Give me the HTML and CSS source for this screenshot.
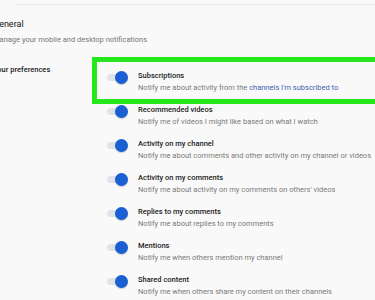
FILE: index.html
```html
<!DOCTYPE html>
<html lang="en">
<head>
    <meta charset="UTF-8">
    <meta name="viewport" content="width=device-width, initial-scale=1.0">
    <title>Notifications</title>
    <link rel="stylesheet" href="styles.css">
</head>
<body>
    <div class="divider"></div>
    <div class="section">
        <h2>General</h2>
        <p class="section-desc">Manage your mobile and desktop notifications</p>
        <div class="prefs">
            <div class="prefs-label">Your preferences</div>
            <div class="prefs-list">
                <div class="row highlighted">
                    <span class="toggle on"><span class="thumb"></span></span>
                    <div class="row-text">
                        <div class="row-title">Subscriptions</div>
                        <div class="row-desc">Notify me about activity from the <a href="#">channels I'm subscribed to</a></div>
                    </div>
                    <div class="highlight"></div>
                </div>
                <div class="row">
                    <span class="toggle on"><span class="thumb"></span></span>
                    <div class="row-text">
                        <div class="row-title">Recommended videos</div>
                        <div class="row-desc">Notify me of videos I might like based on what I watch</div>
                    </div>
                </div>
                <div class="row">
                    <span class="toggle on"><span class="thumb"></span></span>
                    <div class="row-text">
                        <div class="row-title">Activity on my channel</div>
                        <div class="row-desc">Notify me about comments and other activity on my channel or videos</div>
                    </div>
                </div>
                <div class="row">
                    <span class="toggle on"><span class="thumb"></span></span>
                    <div class="row-text">
                        <div class="row-title">Activity on my comments</div>
                        <div class="row-desc">Notify me about activity on my comments on others' videos</div>
                    </div>
                </div>
                <div class="row">
                    <span class="toggle on"><span class="thumb"></span></span>
                    <div class="row-text">
                        <div class="row-title">Replies to my comments</div>
                        <div class="row-desc">Notify me about replies to my comments</div>
                    </div>
                </div>
                <div class="row">
                    <span class="toggle on"><span class="thumb"></span></span>
                    <div class="row-text">
                        <div class="row-title">Mentions</div>
                        <div class="row-desc">Notify me when others mention my channel</div>
                    </div>
                </div>
                <div class="row">
                    <span class="toggle on"><span class="thumb"></span></span>
                    <div class="row-text">
                        <div class="row-title">Shared content</div>
                        <div class="row-desc">Notify me when others share my content on their channels</div>
                    </div>
                </div>
            </div>
        </div>
    </div>
</body>
</html>
```

FILE: styles.css
```css
body {
    background-color: #f9f9f9;
    color: #282828;
    font-family: 'Roboto', 'Liberation Sans', sans-serif;
    margin: 0;
    overflow: hidden;
    white-space: nowrap;
}
.divider {
    height: 1px;
    background-color: #e6e6e6;
    margin: 4px 0 0 16px;
}
.section {
    margin-left: -7px;
}
h2 {
    font-size: 9px;
    font-weight: 400;
    line-height: 14px;
    margin: 12px 0 0;
    color: #111;
}
.section-desc {
    font-size: 7.5px;
    line-height: 12px;
    margin: 3px 0 0;
    color: #777;
}
.prefs {
    display: grid;
    grid-template-columns: 114px 1fr;
    margin-top: 18px;
}
.prefs-label {
    font-size: 7.5px;
    font-weight: 500;
    line-height: 12px;
    color: #222;
    padding-left: 0;
}
.prefs-list {
    padding-top: 2px;
}
.row {
    position: relative;
    display: flex;
    gap: 10px;
    padding: 4px 0 6px;
}
.toggle {
    position: relative;
    width: 21px;
    height: 13px;
    margin-top: 1px;
    flex-shrink: 0;
}
.toggle::before {
    content: '';
    position: absolute;
    left: 0;
    top: 3px;
    width: 18px;
    height: 7px;
    border-radius: 4px;
    background-color: #dfe3ea;
}
.thumb {
    position: absolute;
    right: 0;
    top: 0;
    width: 13px;
    height: 13px;
    border-radius: 50%;
    background-color: #1a5fd3;
    box-shadow: 0 1px 1px rgba(0, 0, 0, 0.2);
}
.row-title {
    font-size: 7.5px;
    font-weight: 500;
    line-height: 12px;
    color: #222;
}
.row-desc {
    font-size: 7.5px;
    line-height: 12px;
    color: #7a7a7a;
}
.row-desc a {
    color: #3d62ad;
    text-decoration: none;
}
/* green annotation box around the first row */
.highlight {
    position: absolute;
    left: -15px;
    top: -9px;
    right: -80px;
    height: 47px;
    box-sizing: border-box;
    border: 5px solid #26e61c;
}
```
